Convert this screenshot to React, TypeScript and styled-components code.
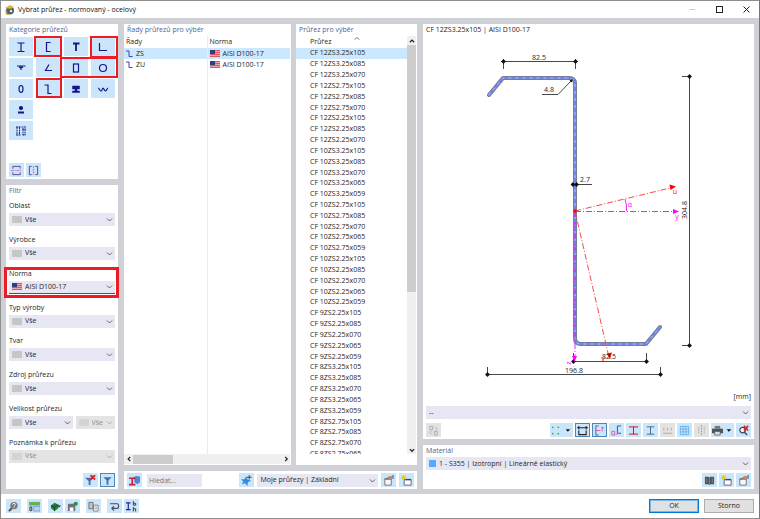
import React from "react";
import styled, { createGlobalStyle, css } from "styled-components";

const ink = "#262626";
const accent = "#4d648f";
const field = "#e7e7f3";
const pale = "#cbe6fa";
const navy = "#14148c";

const Global = createGlobalStyle`
  * { box-sizing: border-box; }
  body { margin: 0; }
  body, button, input, select, table {
    font-family: "Open Sans", "Noto Sans", sans-serif;
    font-size: 7px;
    line-height: 10px;
    color: ${ink};
  }
  svg { display: block; }
`;

const Window = styled.div`
  height: 100vh;
  display: flex;
  flex-direction: column;
  background: #fff;
  border: 1px solid #8e8e8e;
  border-right-color: #76767c;
`;

const TitleBar = styled.header`
  height: 17px;
  flex: none;
  display: flex;
  align-items: center;
  gap: 3px;
  padding: 0 8px 0 4px;
`;

const WindowTitle = styled.h1`
  margin: 0;
  flex: 1;
  font-size: 7px;
  font-weight: 400;
  color: #111;
`;

const WindowButtons = styled.div`
  display: flex;
  gap: 18px;
`;

const WindowButton = styled.button`
  width: 9px;
  height: 9px;
  padding: 0;
  border: 0;
  background: none;
`;

const Workspace = styled.main`
  flex: 1;
  min-height: 0;
  display: grid;
  grid-template-columns: 112fr 293fr 331fr;
  gap: 6px;
  padding: 6px 5px 5px;
  background: #d0d0d7;
`;

const Column = styled.div`
  display: flex;
  flex-direction: column;
  gap: 6px;
  min-width: 0;
  min-height: 0;
`;

const Panel = styled.section<{ $grow?: boolean }>`
  display: flex;
  flex-direction: column;
  min-height: 0;
  min-width: 0;
  padding: 0 3px 2px;
  background: #fff;
  ${(p) => (p.$grow ? "flex: 1;" : "flex: none;")}
`;

const PanelTitle = styled.h2<{ $plain?: boolean }>`
  margin: 0;
  flex: none;
  height: 12px;
  font-size: 7px;
  line-height: 12px;
  font-weight: 400;
  color: ${(p) => (p.$plain ? ink : accent)};
`;

const TablePair = styled.div`
  flex: 1;
  min-height: 0;
  display: grid;
  grid-template-columns: 167fr 121fr;
  gap: 5px;
`;

const ListPanel = styled(Panel)`
  padding: 0 1px 1px 0;
  h2 { padding-left: 3px; }
`;

const CategoryGrid = styled.div`
  position: relative;
  display: grid;
  grid-template-columns: repeat(4, 1fr);
  grid-auto-rows: 19px;
  gap: 2px 3px;
  padding-top: 1px;
`;

const CategoryButton = styled.button<{ $newRow?: boolean }>`
  display: flex;
  align-items: center;
  justify-content: center;
  padding: 0;
  border: 0;
  background: ${pale};
  ${(p) => p.$newRow && "grid-column: 1;"}
`;

const Highlight = styled.span<{ $left: number; $top: number; $width: number; $height: number }>`
  position: absolute;
  left: ${(p) => p.$left}%;
  top: ${(p) => p.$top}px;
  width: ${(p) => p.$width}%;
  height: ${(p) => p.$height}px;
  border: 2px solid #ed1c24;
  pointer-events: none;
`;

const Bar = styled.div<{ $gap?: number; $end?: boolean; $top?: number }>`
  display: flex;
  align-items: center;
  gap: ${(p) => p.$gap ?? 2}px;
  justify-content: ${(p) => (p.$end ? "flex-end" : "flex-start")};
  margin-top: ${(p) => p.$top ?? 0}px;
`;

const IconButton = styled.button<{ $wide?: boolean; $on?: boolean }>`
  flex: none;
  width: ${(p) => (p.$wide ? 23 : 15)}px;
  height: 14px;
  display: flex;
  align-items: center;
  justify-content: center;
  padding: 0;
  border: ${(p) => (p.$on ? "1px solid #4b86b8" : "0")};
  background: ${pale};
  &:disabled { background: #e3e3e3; }
`;

const Fields = styled.div`
  flex: 1;
  min-height: 0;
  display: flex;
  flex-direction: column;
  justify-content: space-between;
  padding-top: 4px;
  margin-bottom: 10px;
`;

const Field = styled.div<{ $marked?: boolean }>`
  position: relative;
  ${(p) =>
    p.$marked &&
    css`
      &::after {
        content: "";
        position: absolute;
        inset: -2px -4px -4px -5px;
        border: 3px solid #ed1c24;
        pointer-events: none;
      }
    `}
`;

const FieldLabel = styled.label`
  display: block;
  height: 12px;
`;

const Pair = styled.div`
  display: grid;
  grid-template-columns: 63fr 39fr;
  gap: 3px;
`;

const SelectFrame = styled.div<{ $off?: boolean; $active?: boolean; $fill?: boolean }>`
  height: 13px;
  min-width: 0;
  display: flex;
  align-items: center;
  gap: 3px;
  padding: 0 2px 0 3px;
  background: ${(p) => (p.$off ? "#e4e4e4" : field)};
  border-bottom: ${(p) => (p.$active ? "1px solid #3f5688" : "0")};
  ${(p) => p.$fill && "flex: 1;"}
`;

const NativeSelect = styled.select`
  appearance: none;
  flex: 1;
  min-width: 0;
  height: 12px;
  padding: 0;
  border: 0;
  outline: 0;
  background: transparent;
  &:disabled { color: #8c8c8c; opacity: 1; }
`;

const Swatch = styled.span<{ $color: string; $square?: boolean }>`
  flex: none;
  width: ${(p) => (p.$square ? 7 : 10)}px;
  height: 7px;
  background: ${(p) => p.$color};
`;

const SearchInput = styled.input`
  width: 55px;
  height: 13px;
  margin-left: 2px;
  padding: 0 2px;
  border: 0;
  background: ${field};
  &::placeholder { color: #777; }
`;

const Favourites = styled.div`
  flex: none;
  width: 42%;
  display: flex;
`;

const Spacer = styled.span`
  flex: 1;
`;

const ScrollArea = styled.div`
  flex: 1;
  min-height: 0;
  display: flex;
  margin-bottom: 10px;
`;

const Clip = styled.div`
  flex: 1;
  min-width: 0;
  overflow: hidden;
`;

const SeriesTable = styled.table`
  width: 100%;
  height: 100%;
  border-collapse: collapse;
  table-layout: fixed;
  th, td {
    height: 11px;
    padding: 0 2px;
    text-align: left;
    font-weight: 400;
    line-height: 10px;
  }
  th { height: 12px; }
  th + th, td + td { border-left: 1px solid #ececec; }
  tbody tr:last-child td { height: auto; }
`;

const SectionTable = styled.table`
  width: 100%;
  height: calc(100% + 6px);
  border-collapse: collapse;
  th, td {
    padding: 0 0 0 14px;
    text-align: left;
    font-weight: 400;
    line-height: 10px;
  }
  th { height: 12px; }
`;

const Row = styled.tr<{ $selected?: boolean }>`
  background: ${(p) => (p.$selected ? "#cce8ff" : "transparent")};
`;

const CellContent = styled.span`
  display: flex;
  align-items: center;
  gap: 3px;
`;

const HeadContent = styled.span`
  display: flex;
  align-items: flex-start;
  gap: 23px;
`;

const Scrollbar = styled.div<{ $across?: boolean }>`
  flex: none;
  display: flex;
  align-items: center;
  background: #f0f0f0;
  ${(p) =>
    p.$across
      ? "height: 10px; flex-direction: row;"
      : "width: 9px; flex-direction: column;"}
`;

const ScrollButton = styled.button`
  width: 9px;
  height: 9px;
  display: flex;
  align-items: center;
  justify-content: center;
  padding: 0;
  border: 0;
  background: none;
`;

const Thumb = styled.span<{ $size: number; $across?: boolean }>`
  background: #cdcdcd;
  ${(p) =>
    p.$across ? `width: ${p.$size}%; height: 9px;` : `height: ${p.$size}%; width: 9px;`}
`;

const Preview = styled.div`
  flex: 1;
  min-height: 0;
  svg { width: 100%; height: 100%; }
`;

const Unit = styled.div`
  height: 14px;
  text-align: right;
`;

const Footer = styled.footer`
  flex: none;
  height: 24px;
  display: flex;
  align-items: center;
  padding: 0 5px 0 5px;
`;

const FooterTools = styled.div`
  flex: 1;
  display: flex;
  gap: 6px;
`;

const ToolGroup = styled.div`
  display: flex;
  gap: 2px;
`;

const DialogButtons = styled.div`
  display: flex;
  gap: 5px;
`;

const DialogButton = styled.button<{ $primary?: boolean }>`
  width: 50px;
  height: 14px;
  padding: 0;
  border: 1px solid ${(p) => (p.$primary ? "#0078d7" : "#adadad")};
  box-shadow: ${(p) => (p.$primary ? "inset 0 0 0 1px #7ab8ea" : "none")};
  background: #e1e1e1;
  line-height: 10px;
`;

function Chevron({ dir = "down", color = "#555", size = 7 }: { dir?: string; color?: string; size?: number }) {
  const d: Record<string, string> = {
    down: "M1 2.5 3.5 5 6 2.5",
    up: "M1 5 3.5 2.5 6 5",
    left: "M5 1 2.5 3.5 5 6",
    right: "M2.5 1 5 3.5 2.5 6",
  };
  return (
    <svg width={size} height={size} viewBox="0 0 7 7" fill="none" stroke={color} strokeWidth={color === "#222" ? 1.4 : 0.9}>
      <path d={d[dir]} />
    </svg>
  );
}

function SortMark() {
  return (
    <svg width="6" height="3" viewBox="0 0 6 3" fill="none" stroke="#777" strokeWidth=".9">
      <path d="M.5 2.500 3 .5 5.500 2.500" />
    </svg>
  );
}

function Flag() {
  return (
    <svg width="10" height="7" viewBox="0 0 10 7">
      <rect width="10" height="7" fill="#f3a3ab" />
      <path d="M0 .5H10M0 2.5H10M0 4.5H10M0 6.5H10" stroke="#dc5362" />
      <rect width="5" height="4" fill="#2e3f7e" />
    </svg>
  );
}

function ZIcon() {
  return (
    <svg width="7" height="8" viewBox="0 0 7 8" fill="none" stroke="#4040b8">
      <path d="M0 1H3V6.500H6.500" />
    </svg>
  );
}

const categories: [string, React.ReactNode][] = [
  ["I", <path d="M4.500 4H11.500M4.500 12.500H11.500M8 4V12.500" />],
  ["U", <path d="M10.500 3.500H6.500V12.500H10.500" />],
  ["T", <path d="M5 4.500H11.500M8 4.500V12" strokeWidth="1.800" />],
  ["L", <path d="M4.500 4V11.500H12" />],
  ["TT", <path d="M4 6H12.500M6 7 8 8 10 7M8 6V10" />],
  ["V", <path d="M9 4.500 5.500 10.500H12" />],
  ["Obdélník", <rect x="5.500" y="4" width="5" height="8" />],
  ["Kruh", <circle cx="8" cy="8" r="3.500" />],
  ["Ovál", <ellipse cx="8" cy="8" rx="2" ry="3.500" />],
  ["Z", <path d="M4.500 4H8V12.500H11.500" />],
  ["Kolejnice", <path d="M4.500 5H11.500V8H9V10H11.500V11.500H4.500V10H7V8H4.500Z" fill={navy} strokeWidth=".5" />],
  ["Vlna", <path d="M3 7C4.500 7 4.500 10 6 10S7 7 8 7 9 10 10.500 10 12 7 13 7" />],
  ["Plné", <><circle cx="8" cy="6" r="1.500" fill={navy} /><path d="M5 10.500H11" strokeWidth="2" /></>],
  ["Složené", <path d="M3 4H7.500M3 12H7.500M4 4V12M6.500 4V12M8.500 4H13.500M9 6H13M10 6V12M12 6V12M9.500 12H12.500" strokeWidth=".9" strokeDasharray="2 .5" />],
];

const glyphs: Record<string, React.ReactNode> = {
  sectionA: <g fill="none" stroke="#45458c"><path d="M2 4V1.500H10V4M2 8V10.500H10V8" /><path d="M0 6H12" stroke="#c66da8" strokeDasharray="3 1 1 1" /></g>,
  sectionB: <g fill="none" stroke="#45458c"><path d="M4 1.500H1.500V10.500H4M8 1.500H10.500V10.500H8" /><path d="M6 1V11" stroke="#d977b5" strokeWidth="1.500" strokeDasharray="2 1" /></g>,
  filter: <path d="M1.500 2.500H10.500L7 6V10.500H5V6Z" fill="#426fae" />,
  filterOff: <><path d="M0 3H9L6 6.500V11H4V6.500Z" fill="#426fae" /><path d="M6 0 11 5M11 0 6 5" stroke="#e02020" strokeWidth="2" /></>,
  help: <><circle cx="6.500" cy="5" r="4" fill="#777" /><path d="M4 8 1 11" stroke="#444" strokeWidth="2" /><path d="M5 4C5 2 8 2 8 4 8 5 6.500 5 6.500 6.300M6.500 7V8" stroke="#fff" fill="none" /></>,
  units: <><path d="M0 1H12V5H0Z" fill="#65b553" /><path d="M5 6H12V11H5Z" fill="#b9d3f8" stroke="#5a78dc" strokeWidth=".6" /><path d="M1 6.500H3V10.500H1Z" fill="none" stroke="#333" /></>,
  model: <><path d="M1 5 5 2 9 4V8L5 11 1 8Z" fill="#277b3a" /><path d="M1 5 5 6.500 9 4M5 6.500V11" stroke="#114b22" fill="none" /><path d="M8 5H12L10 7Z" fill="#222" /></>,
  save: <><path d="M1 3H9V11H1Z" fill="#6d7278" /><path d="M3 7H7V11H3Z" fill="#fff" /><circle cx="9.500" cy="3" r="2.300" fill="#2c9145" /></>,
  copy: <g strokeWidth=".8"><path d="M1 1.500H5.500V8.500H1Z" fill="#bfc6cc" stroke="#555" /><path d="M6 4.500H11V11H6Z" fill="#fff" stroke="#666" /><path d="M7 6.500H10M7 8.500H10" stroke="#777" /></g>,
  back: <path d="M1 3H9C11 3 11 8 9 8H3M5.500 5.500 3 8 5.500 10.500" fill="none" stroke="#454c64" strokeWidth="1.200" />,
  size: <><path d="M0 2H5M0 9.500H5M2.500 2V9.500" stroke="#24249a" strokeWidth="1.300" /><path d="M8 0V4.500H10.500V2.500H8M8 6.500V11.500M8 8.500H10.500V11.500" stroke="#333" fill="none" /></>,
  library: <><path d="M5 2 9 1 12 2V8L9 10 6 8Z" fill="#5485d8" /><path d="M0 3.500H7M0 10.500H7M3.500 3V10.500" stroke="#d21e35" strokeWidth="1.800" /></>,
  star: <><path d="M5.500 1 7 5 11 6 7.500 8 7 12 4.500 9 1 10 2.500 7 0 4.500 4 4.500Z" fill="#348be0" /><path d="M9 0V5M6.500 2.500H11.500" stroke="#60603a" strokeWidth="1.300" /></>,
  edit: <><path d="M2 4H9V11H2Z" fill="#f8f8f8" stroke="#555" strokeWidth=".8" /><path d="M2 4.500H9" stroke="#555" /><path d="M4 3 7 1 11 1V4L8 5Z" fill="#c38b68" /><path d="M10 0H12V4H10Z" fill="#5f9bdd" /></>,
  create: <><path d="M3.500 5H11V11H3.500Z" fill="#fff" stroke="#444" strokeWidth=".8" /><path d="M3.500 5H11" stroke="#2d438a" strokeWidth="1.500" /><path d="M3 0V6M0 3H6M1 1 5 5M5 1 1 5" stroke="#e3c900" /></>,
  swap: <g stroke="#aaa" fill="none"><path d="M2 1.500H5V5H2ZM7 7H10V11H7Z" /><path d="M8 2 10 4 8 6M4 6 2 8 4 10" /></g>,
  dots: <g fill="#38b94c"><circle cx="2" cy="2.500" r="1" /><circle cx="8" cy="2.500" r="1" /><circle cx="2" cy="9.500" r="1" /><circle cx="8" cy="9.500" r="1" /></g>,
  dims: <g fill="none" stroke="#222" strokeWidth="1.200"><path d="M0 3H12M2 1V5M10 1V5" /><path d="M2 6V10.500H10V6" /></g>,
  axes: <g fill="none"><path d="M5 1H2V11H5" stroke="#54549c" /><path d="M2 6H7M8 3H11M9 2V7" stroke="#d65cac" /></g>,
  stress: <g fill="none"><path d="M11 1H7V9H11" stroke="#454587" /><path d="M1 7H4V11H1ZM5 10H7" stroke="#d65cac" /></g>,
  beamRed: <><path d="M1 2H11M1 10H11" stroke="#dc3c4b" strokeWidth="1.300" /><path d="M6 2V10" stroke="#444" /></>,
  beam: <path d="M2 2H10M2 10H10M6 2V10" stroke="#445f83" />,
  numbers: <g stroke="#aaa"><path d="M1 9H11M2 3V6M6 3V6M10 3V6" /></g>,
  grid: <path d="M1.500 1.500H10.500V10.500H1.500ZM4.500 1V11M7.500 1V11M1 4.500H11M1 7.500H11" fill="none" stroke="#5fb5f5" />,
  gauge: <g stroke="#999" fill="none"><path d="M6 0V12" strokeDasharray="2 1" /><path d="M3 2V10M9 2V10" strokeDasharray="1 1" /></g>,
  print: <><path d="M3 1H9V4H3Z" fill="#777" /><path d="M0 4H12V9H0Z" fill="#505357" /><path d="M3 7H9V11H3Z" fill="#ddd" stroke="#444" strokeWidth=".7" /></>,
  zoomOff: <><circle cx="5" cy="5.500" r="3" fill="#fff" stroke="#445" strokeWidth="1.300" /><path d="M7 8 10 11" stroke="#445" strokeWidth="1.500" /><path d="M6.500 1 11 6M11 1 6.500 6" stroke="#e02020" strokeWidth="1.800" /></>,
  books: <><path d="M1 2H5L6 3 7 2H11V10H7L6 11 5 10H1Z" fill="#4e5358" /><path d="M3 3V9M6 3V10M9 3V9" stroke="#aaa" strokeWidth=".6" /></>,
};

function Tool({ icon, label, wide, on, off }: { icon: string; label: string; wide?: boolean; on?: boolean; off?: boolean }) {
  return (
    <IconButton aria-label={label} $wide={wide} $on={on} disabled={off}>
      <svg width={wide ? 21 : 11} height="11" viewBox={wide ? "0 0 23 12" : "0 0 12 12"}>
        {glyphs[icon]}
        {wide && <path d="M16 4.500H21L18.500 7.500Z" fill="#111" />}
      </svg>
    </IconButton>
  );
}

interface PickerProps {
  id: string;
  value: string;
  label?: string;
  mark?: React.ReactNode;
  off?: boolean;
  active?: boolean;
  fill?: boolean;
}

function Picker({ id, value, label, mark, off, active, fill }: PickerProps) {
  return (
    <SelectFrame $off={off} $active={active} $fill={fill}>
      {mark}
      <NativeSelect id={id} aria-label={label} disabled={off} defaultValue={value}>
        <option>{value}</option>
      </NativeSelect>
      <Chevron color={off ? "#aaa" : "#555"} />
    </SelectFrame>
  );
}

const filters = ["Oblast", "Výrobce", "Norma", "Typ výroby", "Tvar", "Zdroj průřezu", "Velikost průřezu", "Poznámka k průřezu"];

function FilterField({ name }: { name: string }) {
  const id = name.replace(/\s/g, "-");
  const norm = name === "Norma";
  const off = name.startsWith("Poznámka");
  const picker = (
    <Picker
      id={id}
      value={norm ? "AISI D100-17" : "Vše"}
      active={norm}
      off={off}
      mark={norm ? <Flag /> : <Swatch $color={off ? "#d4d4d4" : "#c6c6c6"} />}
    />
  );
  return (
    <Field $marked={norm}>
      <FieldLabel htmlFor={id}>{name}</FieldLabel>
      {name.startsWith("Velikost") ? (
        <Pair>
          {picker}
          <Picker id="size-to" label="Velikost průřezu do" value="Vše" off mark={<Swatch $color="#d4d4d4" />} />
        </Pair>
      ) : (
        picker
      )}
    </Field>
  );
}

const five = ["105", "085", "070", "065", "059"];
const groups: [string, number][] = [
  ["12ZS3.25", 3], ["12ZS2.75", 3], ["12ZS2.25", 3], ["10ZS3.25", 5], ["10ZS2.75", 5],
  ["10ZS2.25", 5], ["9ZS2.25", 5], ["8ZS3.25", 5], ["8ZS2.75", 4],
];
const sections = groups.flatMap(([name, n]) => five.slice(0, n).map((t) => `CF ${name}x${t}`));

function Drawing() {
  const profile = "M489 95 503 78H569Q575 78 575 84V338Q575 344 581 344H646L660 327";
  return (
    <svg viewBox="426 37 325 354" role="img" aria-label="CF 12ZS3.25x105" fontSize="7" fill={ink}>
      <g fill="none" strokeLinejoin="round" strokeLinecap="round">
        <path d={profile} stroke="#777a82" strokeWidth="4" />
        <path d={profile} stroke="#7186e4" strokeWidth="2.600" />
        <path d={profile} stroke="#b5bff0" strokeWidth="1" strokeDasharray="2 5" />
      </g>
      <g fill="none" stroke="#333" strokeWidth=".9">
        <path d="M501 61.500H578M503.500 59V69M575.500 59V69" />
        <path d="M689.500 75V347M682 76.500H691M682 345.500H691" />
        <path d="M542 94.500H558L572 80M571 184.500H592" />
        <path d="M572 361.500H648M573.500 353V363M646.500 353V363" />
        <path d="M486 374.500H662M487.500 367V376M660.500 367V376" />
      </g>
      <g fill="#111">
        {[[503.5, 61.5], [575.5, 61.5], [689.5, 76.5], [689.5, 345.5], [573.5, 361.5], [646.5, 361.5], [487.5, 374.5], [660.5, 374.5], [573, 184.5], [576.5, 184.5]].map(([x, y]) => (
          <path key={`${x}-${y}`} d={`M${x - 2.4} ${y}L${x} ${y - 2.4}L${x + 2.4} ${y}L${x} ${y + 2.4}Z`} />
        ))}
        <path d="M573 79 569.500 80.500 571.500 82.500Z" />
      </g>
      <g fill="none" stroke="#ff00ff" strokeWidth=".9">
        <path d="M575 211.500H676M575 211V358" strokeDasharray="6 2 1 2" />
        <path d="M625 199Q627 205 626.500 211" />
      </g>
      <g fill="none" stroke="#ff3030" strokeWidth=".9" strokeDasharray="6 2 1 2">
        <path d="M575 211 672 187.500M575 211 608 353" />
      </g>
      <path d="M679 211.500 673 209V214ZM574.500 362 572 356H577Z" fill="#ff00ff" />
      <path d="M676 186.500 669.500 184.500 670.500 190ZM610 359 606.500 353.500 612 352.500Z" fill="#f00" />
      <circle cx="575" cy="211" r="1.700" fill="#f00" />
      <g textAnchor="middle">
        <text x="539" y="60">82.5</text>
        <text x="549" y="92">4.8</text>
        <text x="585" y="182">2.7</text>
        <text x="609" y="359">82.5</text>
        <text x="574" y="373">196.8</text>
        <text transform="translate(687 210) rotate(-90)">304.8</text>
        <text x="675" y="194" fill="#f00">u</text>
        <text x="603" y="361" fill="#f00">v</text>
        <text x="677" y="219" fill="#ff00ff">y</text>
        <text x="630" y="207" fill="#ff00ff">α</text>
        <text transform="translate(571 363) rotate(-90)" fill="#ff00ff">z</text>
      </g>
    </svg>
  );
}

export default function App() {
  return (
    <>
      <Global />
      <Window>
        <TitleBar>
          <svg width="10" height="10" viewBox="0 0 10 10">
            <circle cx="5" cy="5.500" r="4" fill="#476b87" />
            <path d="M0 3 5 0 9 2 6 4Z" fill="#e7b62d" />
            <circle cx="6" cy="6" r="2" fill="#d3e0e5" stroke="#222" strokeWidth=".7" />
            <path d="M1 5V9L4 10" fill="none" stroke="#d7a72b" />
          </svg>
          <WindowTitle>Vybrat průřez - normovaný - ocelový</WindowTitle>
          <WindowButtons>
            <WindowButton aria-label="Minimalizovat"><svg width="9" height="9"><path d="M1.500 4.500H7.500" stroke="#ccc" /></svg></WindowButton>
            <WindowButton aria-label="Maximalizovat"><svg width="9" height="9"><rect x="1.500" y="1.500" width="6" height="6" fill="none" stroke="#222" /></svg></WindowButton>
            <WindowButton aria-label="Zavřít"><svg width="9" height="9"><path d="M1.500 1.500 7.500 7.500M7.500 1.500 1.500 7.500" stroke="#222" /></svg></WindowButton>
          </WindowButtons>
        </TitleBar>

        <Workspace>
          <Column>
            <Panel>
              <PanelTitle>Kategorie průřezů</PanelTitle>
              <CategoryGrid>
                {categories.map(([name, shape]) => (
                  <CategoryButton key={name} aria-label={name} $newRow={name === "Složené"}>
                    <svg width="16" height="16" viewBox="0 0 16 16" fill="none" stroke={navy} strokeWidth="1.200">{shape}</svg>
                  </CategoryButton>
                ))}
                <Highlight $left={24} $top={0} $width={26} $height={21} />
                <Highlight $left={76} $top={0} $width={27} $height={22} />
                <Highlight $left={48} $top={21} $width={55} $height={21} />
                <Highlight $left={25} $top={42} $width={25} $height={20} />
              </CategoryGrid>
              <Bar $top={23}>
                <Tool icon="sectionA" label="Vodorovný průřez" />
                <Tool icon="sectionB" label="Svislý průřez" />
              </Bar>
            </Panel>
            <Panel $grow>
              <PanelTitle>Filtr</PanelTitle>
              <Fields>{filters.map((name) => <FilterField key={name} name={name} />)}</Fields>
              <Bar $end>
                <Tool icon="filterOff" label="Zrušit filtr" />
                <Tool icon="filter" label="Použít filtr" on />
              </Bar>
            </Panel>
          </Column>

          <Column>
            <TablePair>
              <ListPanel>
                <PanelTitle>Řady průřezů pro výběr</PanelTitle>
                <Clip>
                  <SeriesTable>
                    <thead><tr><th scope="col">Řady</th><th scope="col">Norma</th></tr></thead>
                    <tbody>
                      {["ZS", "ZU"].map((name, i) => (
                        <Row key={name} $selected={i === 0}>
                          <td><CellContent><ZIcon />{name}</CellContent></td>
                          <td><CellContent><Flag />AISI D100-17</CellContent></td>
                        </Row>
                      ))}
                      <tr><td /><td /></tr>
                    </tbody>
                  </SeriesTable>
                </Clip>
                <Scrollbar $across>
                  <ScrollButton aria-label="Posunout vlevo"><Chevron dir="left" color="#222" size={6} /></ScrollButton>
                  <Thumb $size={24} $across />
                  <Spacer />
                  <ScrollButton aria-label="Posunout vpravo"><Chevron dir="right" color="#222" size={6} /></ScrollButton>
                </Scrollbar>
              </ListPanel>
              <ListPanel>
                <PanelTitle>Průřez pro výběr</PanelTitle>
                <ScrollArea>
                  <Clip>
                    <SectionTable>
                      <thead><tr><th scope="col"><HeadContent>Průřez<SortMark /></HeadContent></th></tr></thead>
                      <tbody>
                        {sections.map((name, i) => <Row key={name} $selected={i === 0}><td>{name}</td></Row>)}
                      </tbody>
                    </SectionTable>
                  </Clip>
                  <Scrollbar>
                    <ScrollButton aria-label="Posunout nahoru"><Chevron dir="up" color="#222" size={6} /></ScrollButton>
                    <Thumb $size={59} />
                    <Spacer />
                    <ScrollButton aria-label="Posunout dolů"><Chevron color="#222" size={6} /></ScrollButton>
                  </Scrollbar>
                </ScrollArea>
              </ListPanel>
            </TablePair>
            <Panel>
              <Bar $gap={3} $top={2}>
                <Tool icon="library" label="Knihovna průřezů" />
                <SearchInput type="search" aria-label="Hledat" placeholder="Hledat..." />
                <Spacer />
                <Tool icon="star" label="Přidat k oblíbeným" />
                <Favourites>
                  <Picker id="favourites" label="Oblíbené" value="Moje průřezy | Základní" fill />
                </Favourites>
                <Tool icon="edit" label="Upravit" />
                <Tool icon="create" label="Nový" />
              </Bar>
            </Panel>
          </Column>

          <Column>
            <Panel $grow>
              <PanelTitle $plain>CF 12ZS3.25x105 | AISI D100-17</PanelTitle>
              <Preview><Drawing /></Preview>
              <Unit>[mm]</Unit>
              <Picker id="view" label="Zobrazení" value="--" />
              <Bar $top={4}>
                <Tool icon="swap" label="Převrátit" off />
                <Spacer />
                <Tool icon="dots" label="Body" wide />
                <Tool icon="dims" label="Kóty" on />
                <Tool icon="axes" label="Osy" on />
                <Tool icon="stress" label="Napěťové body" />
                <Tool icon="beamRed" label="Části průřezu" />
                <Tool icon="beam" label="Obrys" />
                <Tool icon="numbers" label="Čísla" off />
                <Tool icon="grid" label="Rastr" />
                <Tool icon="gauge" label="Výztuž" off />
                <Tool icon="print" label="Tisk" wide />
                <Tool icon="zoomOff" label="Zrušit přiblížení" />
              </Bar>
            </Panel>
            <Panel>
              <PanelTitle>Materiál</PanelTitle>
              <Picker id="material" label="Materiál" value="1 - S355 | Izotropní | Lineárně elastický" mark={<Swatch $color="#55aaff" $square />} />
              <Bar $end $top={3}>
                <Tool icon="books" label="Knihovna materiálů" />
                <Tool icon="create" label="Nový materiál" />
                <Tool icon="edit" label="Upravit materiál" />
              </Bar>
            </Panel>
          </Column>
        </Workspace>

        <Footer>
          <FooterTools>
            <Tool icon="help" label="Nápověda" />
            <Tool icon="units" label="Jednotky" />
            <ToolGroup>
              <Tool icon="model" label="Model" />
              <Tool icon="save" label="Uložit" />
            </ToolGroup>
            <Tool icon="copy" label="Kopírovat" />
            <ToolGroup>
              <Tool icon="back" label="Zpět" />
              <Tool icon="size" label="Rozměry" />
            </ToolGroup>
          </FooterTools>
          <DialogButtons>
            <DialogButton $primary>OK</DialogButton>
            <DialogButton>Storno</DialogButton>
          </DialogButtons>
        </Footer>
      </Window>
    </>
  );
}
